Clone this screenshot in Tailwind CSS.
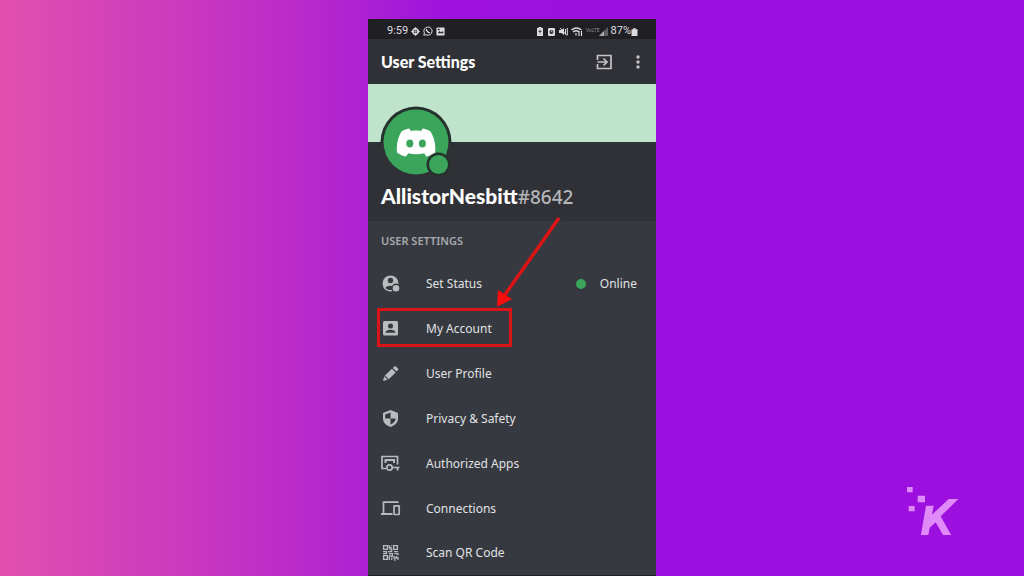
<!DOCTYPE html>
<html lang="en">
<head>
<meta charset="utf-8">
<meta name="viewport" content="width=device-width, initial-scale=1">
<title>User Settings</title>
<script src="https://cdn.jsdelivr.net/npm/@tailwindcss/browser@4"></script>
</head>
<body class="relative flex min-h-screen justify-center overflow-x-hidden bg-[#9b10de] bg-[linear-gradient(90deg,#e150ae_0%,#cc3cbd_16%,#bb2aca_29%,#ac20d4_36%,#9f12dd_43%,#9b10de_60%)] pt-[19px] font-['Noto_Sans','Open_Sans',sans-serif]">

<main class="flex w-72 flex-col border-b border-[#1f2024] bg-[#36393f] text-[#e0e2e5]">

  <!-- Phone status bar -->
  <div class="flex h-5 items-center justify-between bg-[#202024] pt-1 pr-[18px] pl-[19px] font-[Roboto,sans-serif] text-[11px] text-[#dcdce0]">
    <div class="flex items-center gap-[3px]">
      <span>9:59</span>
      <svg class="size-[9px]" viewBox="0 0 10 10" fill="currentColor" aria-hidden="true"><path d="M5 0l2 2h1v1l2 2-2 2v1H7l-2 2-2-2H2V7L0 5l2-2V2h1z"/><path d="M4 3v4M6 3v4M3 4h4M3 6h4" stroke="#202024" stroke-width=".6"/></svg>
      <svg class="size-[10px]" viewBox="0 0 10 10" fill="none" stroke="currentColor" aria-hidden="true"><path d="M.8 9.200l.6-2.100A4.100 4.100 0 1 1 3 8.700z"/><path d="M3.500 3c-.3 1.800 1.500 3.800 3.500 3.600" stroke-width="1.300"/></svg>
      <svg class="size-[9px]" viewBox="0 0 10 10" aria-hidden="true"><rect x=".5" y=".5" width="9" height="9" rx="1" fill="currentColor"/><path d="M2 7l2-2.500 1.500 1.500L7 4.500 8.500 7zM2 2h2v1.500H2z" fill="#202024"/></svg>
    </div>
    <div class="flex items-center gap-[3px]">
      <svg class="h-[9px] w-[8px]" viewBox="0 0 8 9" aria-hidden="true"><path d="M2.500 0h3v1H7v8H1V1h1.500z" fill="currentColor"/><path d="M4 2.500v4M2.500 4.500h3" stroke="#202024" stroke-width=".7"/></svg>
      <svg class="size-[9px]" viewBox="0 0 9 9" aria-hidden="true"><rect x="1" y="1" width="7" height="8" rx="1" fill="currentColor"/><circle cx="4.500" cy="5" r="2" fill="#202024"/><path d="M4.500 3.500V5h1.200" stroke="currentColor" stroke-width=".8" fill="none"/></svg>
      <svg class="size-[9px]" viewBox="0 0 9 9" aria-hidden="true"><path d="M0 3h2.500L5 1v7L2.500 6H0z" fill="currentColor"/><path d="M6.500 2v5.500M8.300 1v7M1 1l7 7.500" stroke="currentColor" fill="none"/></svg>
      <svg class="h-[9px] w-[12px]" viewBox="0 0 12 9" fill="none" stroke="currentColor" aria-hidden="true"><path d="M.5 3q5-4 10 0M2 5q3.500-2.500 6 0" stroke-width="1.400"/><path d="M5 6v2.500M8 4v5M10.500 4v5" stroke-width="1.200"/></svg>
      <span class="text-[5px] text-[#8b8c90]">VoLTE</span>
      <svg class="-ml-1 size-[9px]" viewBox="0 0 9 9" aria-hidden="true"><path d="M0 9L9 0v9z" fill="#5d5e62"/><path d="M0 9l5-5v5z" fill="#a9aaae"/></svg>
      <div class="flex items-center">
        <span>87%</span>
        <svg class="h-[9px] w-[7px]" viewBox="0 0 7 9" fill="currentColor" aria-hidden="true"><path d="M2.500 1h2v1.200H6.500V9h-6V2.200h2z"/></svg>
      </div>
    </div>
  </div>

  <header class="flex h-[45px] items-center justify-between bg-[#303136] pr-[9px] pl-[13px]">
    <h1 class="font-[Lato,sans-serif] text-[16px] font-black text-white">User Settings</h1>
    <div class="flex items-center gap-4 text-[#c3c4c8]">
      <button type="button" aria-label="Log out" class="size-[18px]">
        <svg class="size-[18px]" viewBox="0 0 18 18" fill="none" stroke="currentColor" stroke-width="1.700" aria-hidden="true"><path d="M2.500 7V2.500h13.500v13H2.500V11"/><path d="M2.500 9h9M8.500 5.500L12 9l-3.500 3.500"/></svg>
      </button>
      <button type="button" aria-label="More options" class="size-[18px]">
        <svg class="size-[18px]" viewBox="0 0 18 18" fill="currentColor" aria-hidden="true"><circle cx="9" cy="4" r="1.700"/><circle cx="9" cy="9" r="1.700"/><circle cx="9" cy="14" r="1.700"/></svg>
      </button>
    </div>
  </header>

  <section class="bg-[#303136]">
    <div class="h-[58px] bg-[#bfe3cb]"></div>
    <div class="relative h-[79px] px-[13px] pt-10">
      <svg class="absolute -top-9 left-3 size-[72px]" viewBox="0 0 72 72" role="img" aria-label="Avatar, online">
        <circle cx="36" cy="36" r="35.500" fill="#26322d"/>
        <path d="M.5 36h71a35.500 35.500 0 0 1-71 0z" fill="#303136"/>
        <circle cx="36" cy="36" r="32.500" fill="#3ba55c"/>
        <path d="M29.500 22.500C26 23 23.500 24 21.500 25.500 18 31 16.300 38 17 46.500c3 2.300 6 3.500 9 4l2.200-3.300c5 1.300 11 1.300 16 0l2 3.300c3-.5 6-1.700 9-4 .8-8.500-1.200-15.500-4.700-21-2-1.500-4.500-2.500-8-3l-1.300 2.400c-3.300-.5-7-.5-10.400 0z" fill="#fff"/>
        <ellipse cx="29.800" cy="37.500" rx="3.500" ry="3.900" fill="#3ba55c"/>
        <ellipse cx="42.400" cy="37.500" rx="3.500" ry="3.900" fill="#3ba55c"/>
        <circle cx="58.500" cy="58.500" r="12" fill="#26322d"/>
        <circle cx="58.500" cy="58.500" r="9.500" fill="#3ba55c"/>
      </svg>
      <h2 class="font-[Lato,sans-serif] text-[21px] leading-[28px] font-black whitespace-nowrap text-white">AllistorNesbitt<span class="font-['Noto_Sans',sans-serif] text-[19px] font-medium text-[#b4b6ba]">#8642</span></h2>
    </div>
  </section>

  <section class="relative">
    <h3 class="flex h-10 items-center px-[13px] text-[11px] font-semibold text-[#a7a9ae]">USER SETTINGS</h3>
    <ul class="text-[12px]">
      <li>
        <button type="button" class="flex h-[45px] w-full items-center gap-[25px] pr-[19px] pl-[13px] text-left">
          <svg class="size-5 text-[#b9bbbe]" viewBox="0 0 20 20" aria-hidden="true"><circle cx="9.500" cy="9.500" r="8" fill="currentColor"/><circle cx="9.500" cy="6.500" r="2.700" fill="#36393f"/><path d="M4.500 13.700c1-2.700 9-2.700 10 0-1.500 3.200-8.500 3.200-10 0z" fill="#36393f"/><circle cx="15" cy="14.200" r="4.700" fill="#36393f"/><circle cx="15" cy="14.200" r="3.300" fill="currentColor"/></svg>
          <span class="grow">Set Status</span>
          <span class="size-[10px] rounded-full bg-[#3ba55c]"></span>
          <span class="-ml-[11px]">Online</span>
        </button>
      </li>
      <li class="relative">
        <button type="button" class="flex h-[45px] w-full items-center gap-[25px] px-[13px] text-left">
          <svg class="size-5 text-[#b9bbbe]" viewBox="0 0 20 20" aria-hidden="true"><rect x="2" y="2" width="15" height="14.500" rx="1.500" fill="currentColor"/><circle cx="9.500" cy="7" r="2.500" fill="#36393f"/><path d="M4.500 13.800c0-4 10-4 10 0z" fill="#36393f"/></svg>
          <span>My Account</span>
        </button>
        <span class="pointer-events-none absolute top-[2px] left-[9px] h-[39px] w-[135px] border-3 border-[#dc1416]"></span>
      </li>
      <li>
        <button type="button" class="flex h-[45px] w-full items-center gap-[25px] px-[13px] text-left">
          <svg class="size-5 text-[#b9bbbe]" viewBox="0 0 20 20" fill="currentColor" aria-hidden="true"><path d="M2 17l1.200-4.700 3.500 3.500zM3.900 11.500l7-6.700 3.800 3.800-7 6.700zM11.800 4l1.500-1.500q.8-.7 1.600 0l2.100 2.100q.7.700 0 1.500l-1.500 1.500z"/></svg>
          <span>User Profile</span>
        </button>
      </li>
      <li>
        <button type="button" class="flex h-[45px] w-full items-center gap-[25px] px-[13px] text-left">
          <svg class="size-5 text-[#b9bbbe]" viewBox="0 0 20 20" aria-hidden="true"><path d="M9.500 1l7.500 3v5.500c0 4-3 7-7.500 8.500C5 16.500 2 13.500 2 9.500V4z" fill="currentColor"/><path d="M9.500 3.500v6H4.200V5.400zM9.500 9.500h5.200c-.3 2.700-2.200 4.700-5.200 6z" fill="#36393f"/></svg>
          <span>Privacy &amp; Safety</span>
        </button>
      </li>
      <li>
        <button type="button" class="flex h-[45px] w-full items-center gap-[25px] px-[13px] text-left">
          <svg class="size-5 text-[#b9bbbe]" viewBox="0 0 20 20" fill="none" stroke="currentColor" stroke-width="1.700" aria-hidden="true"><path d="M5 14.500H1V2.500h15.500v8"/><path d="M4.500 9V6H13v3" stroke-width="2"/><circle cx="8.500" cy="13.500" r="2.700"/><path d="M11 13.500h7.500M16.500 13.500v3"/></svg>
          <span>Authorized Apps</span>
        </button>
      </li>
      <li>
        <button type="button" class="flex h-[45px] w-full items-center gap-[25px] px-[13px] text-left">
          <svg class="size-5 text-[#b9bbbe]" viewBox="0 0 20 20" fill="none" stroke="currentColor" stroke-width="1.700" aria-hidden="true"><path d="M17.500 3.200H2.500v11.500"/><path d="M0 15h11.500" stroke-width="2"/><rect x="13" y="6.800" width="5.200" height="8.700" rx=".5"/></svg>
          <span>Connections</span>
        </button>
      </li>
      <li>
        <button type="button" class="flex h-11 w-full items-center gap-[25px] px-[13px] text-left">
          <svg class="size-5 text-[#b9bbbe]" viewBox="0 0 20 20" fill="none" stroke="currentColor" stroke-width="1.300" aria-hidden="true"><path d="M2.600 2.600h3.800v3.800H2.600zM12.600 2.600h3.800v3.800h-3.800zM2.600 12.600h3.800v3.800H2.600z"/><path d="M8.200 2v2.500h2.500M10.700 2v.8M8.200 6.200h2.500v2.500H7M2 8.700h3.500v2H2M8 10.700h3.500V13H8.300v4M13 8.700h4M13.500 10.700H17v1.500M13 13v2h2.500v-2M10.700 14.500V17M13 17h1.500M17 14v3"/></svg>
          <span>Scan QR Code</span>
        </button>
      </li>
    </ul>

    <!-- Arrow pointing at the highlighted row -->
    <svg class="pointer-events-none absolute -top-1 left-32 h-[91px] w-[66px]" viewBox="0 0 66 91" aria-hidden="true">
      <path d="M63 1L8 79" stroke="#dc1416" stroke-width="3.500"/>
      <path d="M1 90L2 73l14 9z" fill="#fb0d0d"/>
    </svg>
  </section>
</main>

<!-- Brand mark -->
<svg class="absolute right-[65px] bottom-[41px] h-[50px] w-[54px]" viewBox="0 0 162 150" fill="#e08afa" role="img" aria-label="K logo">
  <path d="M6 6h17v16H6zM38 32h22v20H38zM11 63h18v16H11z"/>
  <path d="M63 62h23l-5 27 50-47h29l-53 52 34 61h-24L92 112l-18 16-5 27H47z"/>
</svg>
</body>
</html>
